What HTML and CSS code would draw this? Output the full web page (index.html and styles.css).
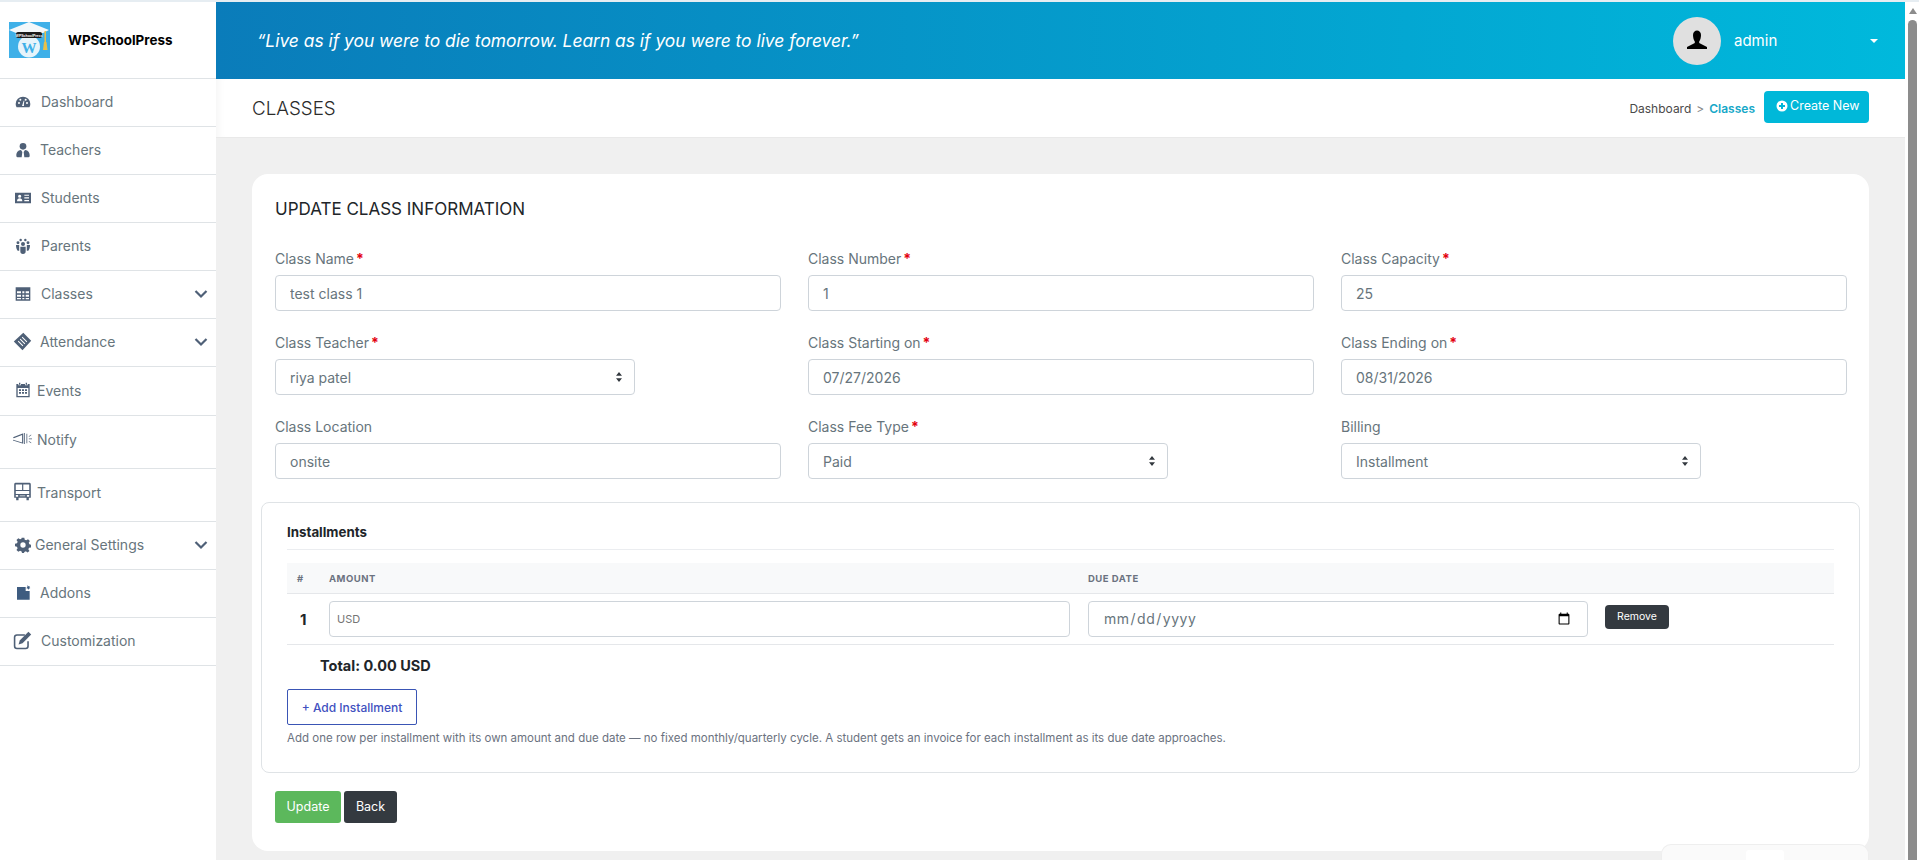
FILE: index.html
```html
<!DOCTYPE html>
<html lang="en">
<head>
<meta charset="utf-8">
<title>WPSchoolPress - Classes</title>
<link rel="stylesheet" href="styles.css">
</head>
<body>
<div class="app">
  <aside class="sidebar">
    <div class="brand">
      <svg class="logo" viewBox="0 0 41 36" aria-hidden="true">
        <rect width="41" height="36" fill="#3fb0e8"/>
        <circle cx="20" cy="24.500" r="11" fill="#e6f4fb"/>
        <text x="20" y="31" text-anchor="middle" class="logo-w">W</text>
        <path d="M0 8L20 0l20 8-6 3H7z" fill="#f4f8fa"/>
        <rect x="7" y="10" width="26" height="6" rx="2" fill="#1c1c1c"/>
        <text x="20" y="14.500" text-anchor="middle" class="logo-band">WPSchoolPress</text>
        <rect x="35.500" y="9" width="1.500" height="12" fill="#e8c04a"/>
        <path d="M35 20h2.500l1 8h-4.500z" fill="#e8c04a"/>
      </svg>
      <span class="brand-name">WPSchoolPress</span>
    </div>
    <nav>
      <a class="item"><svg class="icon w26" viewBox="0 0 24 24"><path d="M12 4a11 11 0 0 0-11 11c0 2 .5 3.700 1.400 5h19.200c.9-1.300 1.400-3 1.400-5A11 11 0 0 0 12 4zM6 15a1.500 1.500 0 1 1 0-3 1.500 1.500 0 0 1 0 3zm2-5a1.500 1.500 0 1 1 0-3 1.500 1.500 0 0 1 0 3zm5.500 8h-3l1-3 1.500-5 1 .3-.7 5zM16 10a1.500 1.500 0 1 1 0-3 1.500 1.500 0 0 1 0 3zm2 5a1.500 1.500 0 1 1 0-3 1.500 1.500 0 0 1 0 3z"/></svg><span>Dashboard</span></a>
      <a class="item"><svg class="icon w25" viewBox="0 0 24 24"><circle cx="12" cy="6.500" r="5"/><path d="M5 23c-2 0-3-1-3-2.500 0-4.500 2-8 7-8.500l2 3-1 8zm14 0c2 0 3-1 3-2.500 0-4.500-2-8-7-8.500l-2 3 1 8z"/></svg><span>Teachers</span></a>
      <a class="item"><svg class="icon w26" viewBox="0 0 24 24"><path fill-rule="evenodd" d="M0 4h24v16H0zm7 3a2.400 2.400 0 1 0 0 4.800A2.400 2.400 0 0 0 7 7zm-4 10h8c0-2.800-1.700-4.500-4-4.500S3 14.200 3 17zM14 7v1.800h7V7zm0 4v1.800h7V11zm0 4v1.800h7V15z"/></svg><span>Students</span></a>
      <a class="item"><svg class="icon w26" viewBox="0 0 24 24"><circle cx="12" cy="9" r="3"/><circle cx="4.500" cy="7" r="2.200"/><circle cx="19.500" cy="7" r="2.200"/><circle cx="8.500" cy="3" r="1.800"/><circle cx="15.500" cy="3" r="1.800"/><path d="M8 13h8v7a4 4 0 0 1-8 0zM1.500 10.500h4.800v8.500H4c-1.700-2.200-2.500-5-2.500-8.500zm16.200 0h4.800c0 3.500-.8 6.300-2.500 8.500h-2.300z"/></svg><span>Parents</span></a>
      <a class="item"><svg class="icon w26" viewBox="0 0 24 24"><path fill-rule="evenodd" d="M1 2h22v20H1zm2 6v3h6V8zm8 0v3h3V8zm5 0v3h5V8zM3 13v3h6v-3zm8 0v3h3v-3zm5 0v3h5v-3zM3 18v2h6v-2zm8 0v2h3v-2zm5 0v2h5v-2z"/></svg><span>Classes</span><svg class="chev" viewBox="0 0 14 10"><path d="M1.500 2l5.500 5.500L12.500 2"/></svg></a>
      <a class="item"><svg class="icon w25 big" viewBox="0 0 24 24"><path fill-rule="evenodd" d="M13 1l10 10-11 12L1 12zm-1 5l-.9.9 6 6 .9-.9zm-2.500 2.500l-.9.9 6 6 .9-.9zm-2.500 2.500l-.9.9 6 6 .9-.9z"/></svg><span>Attendance</span><svg class="chev" viewBox="0 0 14 10"><path d="M1.500 2l5.500 5.500L12.500 2"/></svg></a>
      <a class="item ev"><svg class="icon w22" viewBox="0 0 24 24"><path fill-rule="evenodd" d="M6 1h2v3H6zm10 0h2v3h-2zM2 3h3v2h4V3h6v2h4V3h3v20H2zm2 6v12h16V9zm2 2h3v2.500H6zm4.500 0h3v2.500h-3zm4.500 0h3v2.500h-3zM6 15h3v2.500H6zm4.500 0h3v2.500h-3zm4.500 0h3v2.500h-3z"/></svg><span>Events</span></a>
      <a class="item tall"><svg class="icon w22 big up" viewBox="0 0 24 24"><path d="M0 10.500l13-5v13l-13-4v-1l11.500 3.500V7.500L1 11.800zM14 5h1v14h-1zm3 1h1v12h-1zm3 3l3-2v1l-3 2zm0 3h4v1h-4zm0 3l3 2v1l-3-2z"/></svg><span>Notify</span></a>
      <a class="item tall"><svg class="icon w22 big up" viewBox="0 0 24 24"><path fill-rule="evenodd" d="M3 1h18a2 2 0 0 1 1.500 2v17H20v3h-3v-3H7v3H4v-3H1.500V3A2 2 0 0 1 3 1zm.500 2v7h8V3zm9.500 0v7h7.500V3zM3.500 11.500V15h17v-3.500zm0 5v2h3v-2zm14 0v2h3v-2zm-9 .5v1h7v-1z"/></svg><span>Transport</span></a>
      <a class="item"><svg class="icon w20" viewBox="0 0 24 24"><path fill-rule="evenodd" d="M10 1h4l.6 3 2.300 1 2.600-1.700 2.800 2.800L20.600 8.700l1 2.300 2.400.6v4l-3 .6-1 2.300 1.700 2.600-2.800 2-2.600-1.600-2.300 1L13.500 24h-3l-.6-2.400-2.300-1L5 22.200l-2.800-2.800L3.900 17l-1-2.300L0 14v-4l3-.6 1-2.300L2.200 4.500 5 1.700l2.600 1.700 2-.9zM12 8a4 4 0 1 0 0 8 4 4 0 0 0 0-8z"/></svg><span>General Settings</span><svg class="chev" viewBox="0 0 14 10"><path d="M1.500 2l5.500 5.500L12.500 2"/></svg></a>
      <a class="item"><svg class="icon w25 blue" viewBox="0 0 24 24"><path d="M3 3h13v6h6v13H3z"/><path d="M19 0l1 2 2-.5-.5 2 1.500 1-2 1-.8 1.500-1.200-1.800-2-.5 1.500-1.700z"/></svg><span>Addons</span></a>
      <a class="item"><svg class="icon w26 big" viewBox="0 0 24 24"><path d="M5 4h10v2H5a2 2 0 0 0-2 2v11a2 2 0 0 0 2 2h11a2 2 0 0 0 2-2v-6h2v6a4 4 0 0 1-4 4H5a4 4 0 0 1-4-4V8a4 4 0 0 1 4-4z"/><path d="M19.500 1l3.500 3.500L12 15.500l-5 1.500 1.500-5z"/></svg><span>Customization</span></a>
    </nav>
  </aside>

  <main class="main">
    <header class="topbar">
      <p class="quote">“Live as if you were to die tomorrow. Learn as if you were to live forever.”</p>
      <div class="user">
        <span class="avatar"><svg viewBox="0 0 24 24" aria-hidden="true"><path d="M8 6c0-3 2-4.500 4-4.500S16 3 16 6c0 2.500-.7 5-1.800 6.500v1.500l7.800 4v2H2v-2l7.800-4v-1.500C8.700 11 8 8.500 8 6z"/></svg></span>
        <span class="user-name">admin</span>
        <span class="caret"></span>
      </div>
    </header>

    <div class="titlebar">
      <h1 class="page-title">CLASSES</h1>
      <div class="crumbs">
        <span class="crumb">Dashboard</span>
        <span class="sep">&gt;</span>
        <span class="crumb active">Classes</span>
        <a class="btn-create"><svg viewBox="0 0 24 24" aria-hidden="true"><path fill-rule="evenodd" d="M12 1a11 11 0 1 0 0 22 11 11 0 0 0 0-22zm-2 5h4v4h4v4h-4v4h-4v-4H6v-4h4z"/></svg>Create New</a>
      </div>
    </div>

    <div class="content">
      <section class="card">
        <h2 class="card-title">UPDATE CLASS INFORMATION</h2>
        <form class="form-grid">
          <div class="field"><label>Class Name <b>*</b></label><input type="text" value="test class 1"></div>
          <div class="field"><label>Class Number <b>*</b></label><input type="text" value="1"></div>
          <div class="field"><label>Class Capacity <b>*</b></label><input type="text" value="25"></div>

          <div class="field"><label>Class Teacher <b>*</b></label><select class="short"><option>riya patel</option></select></div>
          <div class="field"><label>Class Starting on <b>*</b></label><input type="text" value="07/27/2026"></div>
          <div class="field"><label>Class Ending on <b>*</b></label><input type="text" value="08/31/2026"></div>

          <div class="field"><label>Class Location</label><input type="text" value="onsite"></div>
          <div class="field"><label>Class Fee Type <b>*</b></label><select class="short"><option>Paid</option></select></div>
          <div class="field"><label>Billing</label><select class="short"><option>Installment</option></select></div>
        </form>

        <div class="installments">
          <h3 class="inst-title">Installments</h3>
          <div class="inst-row inst-head">
            <span>#</span><span>AMOUNT</span><span>DUE DATE</span><span></span>
          </div>
          <div class="inst-row inst-body">
            <strong class="num">1</strong>
            <input class="inst-input" type="text" placeholder="USD">
            <input class="inst-date" type="date">
            <button type="button" class="btn-remove">Remove</button>
          </div>
          <p class="total">Total: 0.00 USD</p>
          <button type="button" class="btn-add">+ Add Installment</button>
          <p class="hint">Add one row per installment with its own amount and due date — no fixed monthly/quarterly cycle. A student gets an invoice for each installment as its due date approaches.</p>
        </div>

        <div class="actions">
          <button type="button" class="btn btn-update">Update</button>
          <button type="button" class="btn btn-back">Back</button>
        </div>
      </section>
      <div class="float-panel"><span class="float-tab"></span></div>
    </div>
  </main>

  <div class="scrollbar"><span class="arrow"></span><span class="thumb"></span></div>
</div>
</body>
</html>
```

FILE: styles.css
```css
* { box-sizing: border-box; }
html, body { margin: 0; height: 860px; overflow: hidden; }
body { font-family: Inter, "Noto Sans", sans-serif; font-size: 14px; color: #67757c; background: #fff; }

.app { display: flex; height: 860px; border-top: 2px solid #e6edf2; }

/* sidebar */
.sidebar { width: 216px; flex: none; background: #fff; }
.brand { height: 77px; display: flex; align-items: center; padding-left: 9px; border-bottom: 1px solid #dfe3e6; }
.logo { width: 41px; height: 36px; flex: none; }
.logo-w { font-family: "Liberation Serif", serif; font-size: 15px; font-weight: 700; fill: #3fb0e8; }
.logo-band { font-family: "Liberation Sans", sans-serif; font-size: 3.500px; font-weight: 700; fill: #fff; }
.brand-name { margin-left: 18px; font-size: 13.400px; font-weight: 700; color: #000; }
.item { display: flex; align-items: center; height: 48px; padding: 0 8px 2px 15px; border-bottom: 1px solid #dfe3e6; color: #67757c; font-size: 14px; }
.item.ev { height: 49px; }
.item.tall { height: 53px; padding-bottom: 5px; }
.icon { flex: none; width: 16px; height: 16px; fill: #4f6077; }
.icon.blue { fill: #3e5c80; }
.w26 { margin-right: 10px; }
.w25 { margin-right: 9px; }
.w22 { margin-right: 6px; }
.w20 { margin-right: 4px; }
.icon.big { width: 19px; height: 19px; margin-left: -2px; }
.icon.big.w26 { margin-right: 9px; }
.icon.big.w25 { margin-right: 8px; }
.icon.big.w22 { margin-right: 5px; }
.icon.up { margin-top: -2px; }
.chev { width: 14px; height: 10px; margin-left: auto; fill: none; stroke: #4f6077; stroke-width: 2.200; }

/* main */
.main { flex: 1; min-width: 0; background: #f0f0f0; position: relative; }
.topbar { height: 77px; display: flex; align-items: center; justify-content: space-between; padding: 0 27px 0 41px; background: linear-gradient(90deg, #0a7cba 0%, #00b9dc 100%); }
.quote { margin: 0; font-size: 17.400px; font-style: italic; color: #fff; }
.user { display: flex; align-items: center; width: 205px; }
.avatar { width: 48px; height: 48px; border-radius: 50%; background: #e0e0e0; display: flex; align-items: center; justify-content: center; flex: none; }
.avatar svg { width: 24px; height: 24px; fill: #000; }
.user-name { margin-left: 13px; color: #fff; font-size: 15px; }
.caret { margin-left: auto; border-left: 4px solid transparent; border-right: 4px solid transparent; border-top: 4px solid #fff; }

.titlebar { height: 59px; display: flex; align-items: center; justify-content: space-between; padding: 0 36px; background: #fff; box-shadow: inset 12px 0 12px -12px rgba(0,0,0,.06); border-bottom: 1px solid #e9e9e9; }
.page-title { margin: 0; font-size: 18.800px; font-weight: 300; color: #2b2b2b; }
.crumbs { display: flex; align-items: center; font-size: 12px; color: #4a4a4a; }
.sep { margin: 0 5px; color: #888; }
.crumb.active { color: #17a8c8; font-weight: 600; }
.btn-create { display: flex; align-items: center; width: 105px; height: 32px; margin: -2px 0 0 9px; padding: 0 0 3px 12px; border-radius: 4px; background: #00b8d9; color: #fff; font-size: 12.500px; }
.btn-create svg { width: 12px; height: 12px; fill: #fff; margin-right: 2px; }

.content { padding: 36px 36px 0; }
.card { height: 677px; background: #fff; border-radius: 16px; padding: 24px 9px 0; }
.card-title { margin: 0 14px 30px; font-size: 17px; line-height: 22px; font-weight: 400; color: #212529; }

.form-grid { display: grid; grid-template-columns: repeat(3, 506px); column-gap: 27px; row-gap: 23px; padding: 0 14px; margin-bottom: 23px; }
.field { display: flex; flex-direction: column; }
.field label { font-size: 14px; line-height: 18px; margin-bottom: 7px; color: #67757c; height: 18px; }
.field b { color: #e3000f; font-weight: 700; margin-left: -2px; }
.field input, .field select { height: 36px; padding: 0 14px; font: inherit; font-size: 14px; color: #67757c; background-color: #fff; border: 1px solid #ced4da; border-radius: 4px; outline: none; }
select.short { width: 360px; appearance: none; background-image: url("data:image/svg+xml;utf8,<svg xmlns='http://www.w3.org/2000/svg' width='8' height='10'><path d='M4 0l3 3.800H1zM4 10L1 6.200h6z' fill='%23343a40'/></svg>"); background-repeat: no-repeat; background-position: right 11px center; }

.installments { height: 271px; border: 1px solid #dfe3e6; border-radius: 8px; padding: 21px 25px 0; }
.inst-title { margin: 0 0 13px; height: 26px; padding-bottom: 9px; font-size: 13.300px; line-height: 17px; font-weight: 700; color: #212529; border-bottom: 1px solid #ebedf0; }
.inst-row { display: grid; grid-template-columns: 42px 759px 517px 1fr; align-items: center; }
.inst-head { height: 31px; background: #f8f9fa; border-bottom: 1px solid #e5e7ea; font-size: 9.500px; font-weight: 700; letter-spacing: .5px; color: #6b7280; }
.inst-head span:first-child { padding-left: 10px; }
.inst-body { height: 51px; border-bottom: 1px solid #e5e7ea; }
.num { padding-left: 13px; font-size: 15px; font-weight: 700; color: #212529; }
.inst-input, .inst-date { height: 36px; font: inherit; border: 1px solid #ced4da; border-radius: 4px; outline: none; background: #fff; color: #67757c; }
.inst-input { width: 741px; padding: 0 7px; font-size: 11px; }
.inst-input::placeholder { color: #757575; opacity: 1; }
.inst-date { width: 500px; padding: 0 14px 1px 14px; font-size: 14px; letter-spacing: .5px; }
.btn-remove { justify-self: start; width: 64px; height: 24px; padding: 0 0 2px; border: 0; border-radius: 4px; background: #343a40; color: #fff; font: inherit; font-size: 10.500px; margin-top: -4px; }
.total { margin: 0 0 0 33px; height: 44px; line-height: 41px; font-size: 14.500px; font-weight: 700; color: #212529; }
.btn-add { display: block; width: 130px; height: 36px; padding: 0; background: #fff; border: 1px solid #3a55b5; border-radius: 2px; color: #3f51c0; font: inherit; font-size: 12px; font-weight: 500; }
.hint { margin: 6px 0 0; font-size: 11.500px; line-height: 15px; color: #6b7280; white-space: nowrap; }

.actions { display: flex; gap: 3px; margin: 18px 14px 0; }
.btn { height: 32px; padding: 0 0 1px; border: 0; border-radius: 3px; color: #fff; font: inherit; font-size: 12.500px; }
.btn-update { width: 66px; background: #5cb85c; }
.btn-back { width: 53px; background: #343a40; }

.float-panel { position: absolute; right: 36px; bottom: -2px; width: 208px; height: 18px; background: #fafafa; border: 1px solid #eeeeee; border-bottom: 0; border-radius: 10px 10px 0 0; display: flex; justify-content: center; padding-top: 5px; }
.float-tab { width: 38px; background: #fff; border-radius: 3px 3px 0 0; }

/* scrollbar */
.scrollbar { width: 14px; flex: none; background: #fff; padding: 6px 2px 0 3px; display: flex; flex-direction: column; align-items: center; }
.arrow { border-left: 4.500px solid transparent; border-right: 4.500px solid transparent; border-bottom: 6px solid #8c8c8c; margin-bottom: 6px; }
.thumb { flex: 1; width: 9px; background: #8c8c8c; border-radius: 5px 5px 0 0; }
```
